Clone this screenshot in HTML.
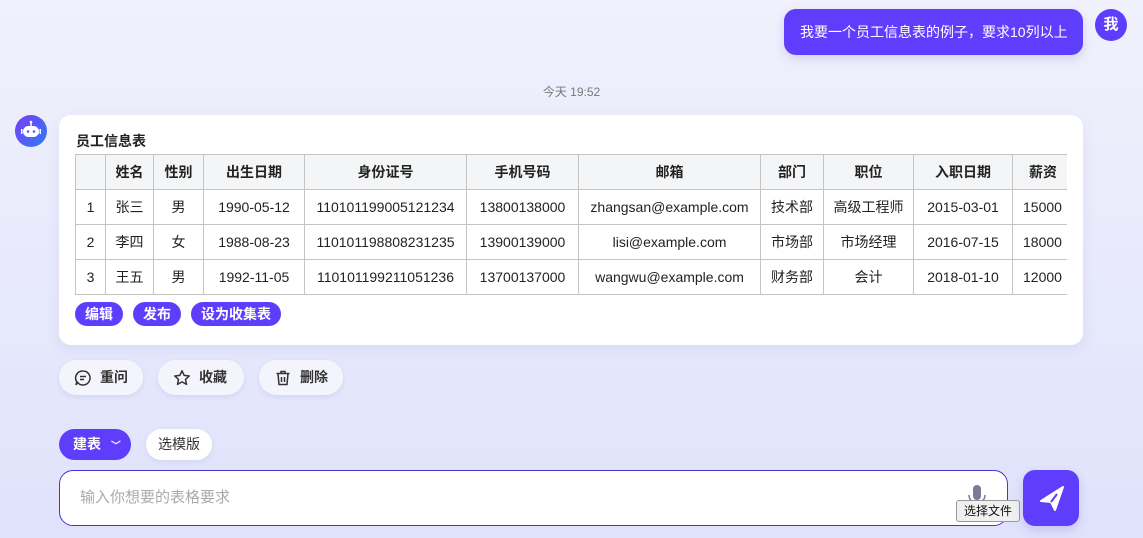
<!DOCTYPE html>
<html><head><meta charset="utf-8"><style>
*{box-sizing:border-box;margin:0;padding:0}
body{width:1143px;height:538px;overflow:hidden;font-family:"Liberation Sans","Noto Sans CJK SC",sans-serif;background:linear-gradient(180deg,#f0f1fc 0%,#e8eafc 50%,#dfe2fb 100%);position:relative;color:#222}
.abs{position:absolute}
.ubub{left:784px;top:9px;width:299px;height:46px;background:#5f3dfc;border-radius:12px;color:#fff;font-size:14px;line-height:46px;padding-left:16px;box-shadow:0 4px 10px rgba(90,70,200,.18)}
.me{left:1095px;top:9px;width:32px;height:32px;border-radius:50%;background:#5f3dfc;color:#fff;font-size:15px;font-weight:bold;text-align:center;line-height:32px}
.time{left:0;width:1143px;top:83px;text-align:center;font-size:12px;color:#777}
.bot{left:15px;top:115px;width:32px;height:32px;border-radius:50%;background:linear-gradient(135deg,#7b3cf5,#2f7af7)}
.card{left:59px;top:115px;width:1024px;height:230px;background:#fff;border-radius:12px;box-shadow:0 4px 14px rgba(100,100,200,.1)}
.ttl{left:76px;top:131px;font-size:14px;font-weight:bold;color:#222}
.tw{left:75px;top:154px;width:992px;height:141px;overflow:hidden}
table{border-collapse:collapse;font-size:14px;table-layout:fixed;width:1050px}
td,th{border:1px solid #c4c4c4;height:35px;text-align:center;white-space:nowrap;color:#222}
th{background:#f4f5f7;font-weight:bold;font-size:14px}
.tag{top:302px;height:24px;border-radius:12px;background:#5f3dfc;color:#fff;font-size:14px;line-height:24px;text-align:center;font-weight:bold}
.act{top:360px;height:35px;border-radius:18px;background:#f4f5fc;box-shadow:0 2px 6px rgba(100,100,180,.12);font-size:14px;line-height:35px;color:#333;font-weight:bold}
.act svg{position:absolute;left:15px;top:9px}
.act span{position:absolute;left:41px}
.jb{left:59px;top:429px;width:72px;height:31px;border-radius:16px;background:#5f3dfc;color:#fff;font-size:14px;line-height:31px;padding-left:14px;font-weight:bold}
.xm{left:146px;top:429px;width:66px;height:31px;border-radius:16px;background:#fff;font-size:14px;line-height:31px;text-align:center;color:#333;box-shadow:0 2px 6px rgba(100,100,180,.1)}
.inp{left:59px;top:470px;width:949px;height:56px;border:1px solid #4a34d0;border-radius:14px;background:#fff;font-size:15px;color:#aaa;line-height:54px;padding-left:20px}
.send{left:1023px;top:470px;width:56px;height:56px;border-radius:12px;background:#5f3dfc;box-shadow:0 4px 10px rgba(90,70,200,.2)}
.file{left:956px;top:500px;width:64px;height:22px;border:1px solid #999;border-radius:3px;background:#f0f0f0;font-size:12px;line-height:20px;text-align:center;color:#111}
</style></head><body>
<div class="abs ubub">我要一个员工信息表的例子，要求10列以上</div>
<div class="abs me">我</div>
<div class="abs time">今天 19:52</div>
<div class="abs bot"><svg width="32" height="32" viewBox="0 0 32 32"><rect x="8" y="11" width="16" height="11" rx="5.5" fill="#fff"/><line x1="16" y1="7" x2="16" y2="11" stroke="#fff" stroke-width="1.5"/><circle cx="16" cy="7" r="1.3" fill="#fff"/><circle cx="13" cy="16.5" r="1.3" fill="#5a5af0"/><circle cx="19" cy="16.5" r="1.3" fill="#5a5af0"/><rect x="6" y="14" width="1.5" height="5" fill="#fff"/><rect x="24.5" y="14" width="1.5" height="5" fill="#fff"/></svg></div>
<div class="abs card"></div>
<div class="abs ttl">员工信息表</div>
<div class="abs tw"><table>
<colgroup><col width="30"><col width="48"><col width="50"><col width="101"><col width="162"><col width="112"><col width="182"><col width="63"><col width="90"><col width="99"><col width="113"></colgroup>
<tr><th></th><th>姓名</th><th>性别</th><th>出生日期</th><th>身份证号</th><th>手机号码</th><th>邮箱</th><th>部门</th><th>职位</th><th>入职日期</th><th style="text-align:left;padding-left:16px">薪资</th></tr>
<tr><td>1</td><td>张三</td><td>男</td><td>1990-05-12</td><td>110101199005121234</td><td>13800138000</td><td>zhangsan@example.com</td><td>技术部</td><td>高级工程师</td><td>2015-03-01</td><td style="text-align:left;padding-left:10px">15000</td></tr>
<tr><td>2</td><td>李四</td><td>女</td><td>1988-08-23</td><td>110101198808231235</td><td>13900139000</td><td>lisi@example.com</td><td>市场部</td><td>市场经理</td><td>2016-07-15</td><td style="text-align:left;padding-left:10px">18000</td></tr>
<tr><td>3</td><td>王五</td><td>男</td><td>1992-11-05</td><td>110101199211051236</td><td>13700137000</td><td>wangwu@example.com</td><td>财务部</td><td>会计</td><td>2018-01-10</td><td style="text-align:left;padding-left:10px">12000</td></tr>
</table></div>
<div class="abs tag" style="left:75px;width:48px">编辑</div>
<div class="abs tag" style="left:133px;width:48px">发布</div>
<div class="abs tag" style="left:191px;width:90px">设为收集表</div>
<div class="abs act" style="left:59px;width:84px"><svg width="18" height="18" viewBox="0 0 18 18" fill="none" stroke="#333" stroke-width="1.5"><path d="M9 2a7 7 0 1 1-5.5 11.3L2 16l.7-3.3A7 7 0 0 1 9 2z"/><line x1="6" y1="7.5" x2="12" y2="7.5"/><line x1="6" y1="10.5" x2="10" y2="10.5"/></svg><span>重问</span></div>
<div class="abs act" style="left:158px;width:86px"><svg width="18" height="18" viewBox="0 0 18 18" fill="none" stroke="#333" stroke-width="1.5" stroke-linejoin="round"><path d="M9 1.8l2.2 4.6 5 .6-3.7 3.4 1 5-4.5-2.5-4.5 2.5 1-5L1.8 7l5-.6z"/></svg><span>收藏</span></div>
<div class="abs act" style="left:259px;width:84px"><svg width="18" height="18" viewBox="0 0 18 18" fill="none" stroke="#333" stroke-width="1.5"><path d="M2.5 4.5h13M7 4.5V2.5h4v2M4 4.5l1 11h8l1-11M7.5 8v5M10.5 8v5"/></svg><span>删除</span></div>
<div class="abs jb">建表 <span style="font-size:10px;margin-left:6px">﹀</span></div>
<div class="abs xm">选模版</div>
<div class="abs inp">输入你想要的表格要求</div>
<svg class="abs" style="left:966px;top:485px" width="22" height="22" viewBox="0 0 22 22"><rect x="7" y="0" width="8" height="15" rx="4" fill="#7a7a98"/><path d="M3 10a8 8 0 0 0 16 0" stroke="#7a7a98" stroke-width="1.5" fill="none"/></svg>
<div class="abs file">选择文件</div>
<div class="abs" style="left:1023px;top:503px;font-size:12px;color:#333">未</div>
<div class="abs send"><svg width="56" height="56" viewBox="0 0 56 56"><path d="M18 31l22-14-8 23-4-8z" fill="#fff" stroke="#fff" stroke-width="2" stroke-linejoin="round"/><path d="M28 32l6-8" stroke="#5f3dfc" stroke-width="2"/></svg></div>
</body></html>
